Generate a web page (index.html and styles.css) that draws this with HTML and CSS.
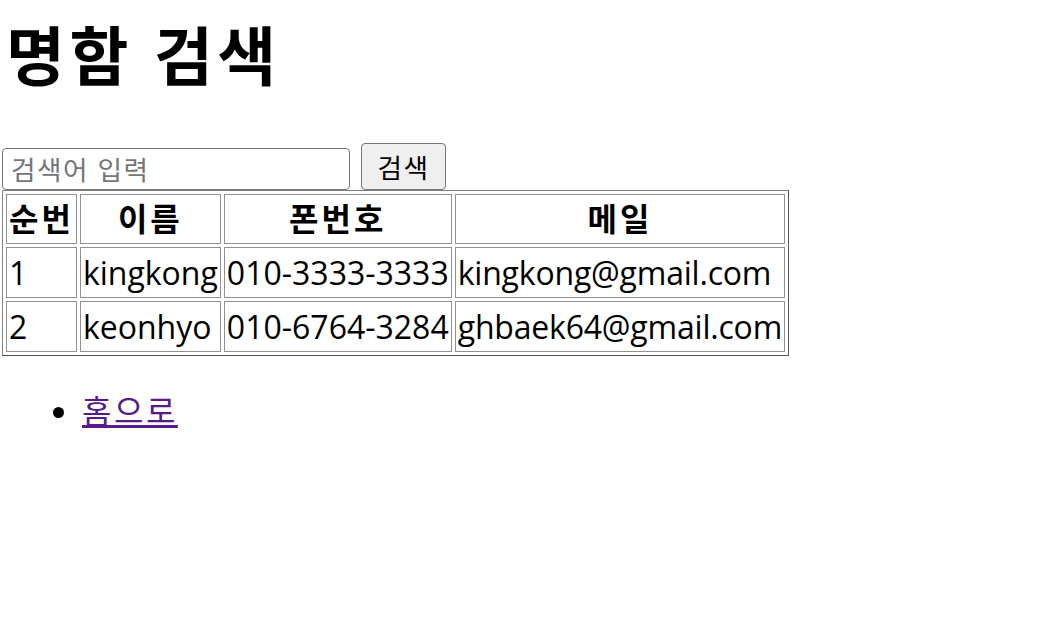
FILE: index.html
```html
<!DOCTYPE html>
<html lang="ko">
<head>
<meta charset="utf-8">
<title>명함 검색</title>
<link rel="stylesheet" href="styles.css">
</head>
<body>
<h1 class="title">명함 검색</h1>
<form class="search">
  <input class="search-input" type="text" placeholder="검색어 입력">
  <button class="search-btn" type="button">검색</button>
</form>
<table class="cards">
  <thead>
    <tr><th>순번</th><th>이름</th><th>폰번호</th><th>메일</th></tr>
  </thead>
  <tbody>
    <tr><td>1</td><td>kingkong</td><td>010-3333-3333</td><td class="mail">kingkong@gmail.com</td></tr>
    <tr><td>2</td><td>keonhyo</td><td>010-6764-3284</td><td class="mail">ghbaek64@gmail.com</td></tr>
  </tbody>
</table>
<ul class="links">
  <li><a class="home-link" href="#">홈으로</a></li>
</ul>
</body>
</html>
```

FILE: styles.css
```css
html, body {
  background: #fff;
}
body {
  margin: 0 2px;
  font-family: "Open Sans", "Noto Sans CJK KR", sans-serif;
  font-size: 32px;
  color: #000;
}
.title {
  font-size: 64px;
  font-weight: 700;
  line-height: 92px;
  letter-spacing: 4.5px;
  margin: 10px 0 41px 4px;
}
.search {
  display: flex;
  align-items: flex-end;
  gap: 11px;
  margin: 0;
}
.search-input {
  box-sizing: border-box;
  width: 348px;
  height: 42px;
  margin: 0;
  padding: 0 8px;
  border: 1px solid #767676;
  border-radius: 4px;
  font-family: inherit;
  font-size: 26.67px;
  letter-spacing: 1.5px;
  color: #000;
  background: #fff;
}
.search-input::placeholder {
  color: #757575;
}
.search-btn {
  box-sizing: border-box;
  width: 85px;
  height: 47px;
  margin: 0;
  padding: 0;
  border: 1px solid #767676;
  border-radius: 4px;
  background: #efefef;
  font-family: inherit;
  font-size: 26.67px;
  letter-spacing: 1.5px;
  color: #000;
}
.cards {
  border: 1px solid #808080;
  border-bottom-color: #555;
  border-right-color: #555;
  border-spacing: 3px;
  font-size: 32px;
}
.cards th,
.cards td {
  border: 1px solid #909090;
  padding: 1px 2px;
}
.cards th {
  font-weight: 700;
  text-align: center;
  letter-spacing: 3px;
  line-height: 46px;
}
.cards td {
  text-align: left;
  line-height: 47px;
}
.cards .mail {
  letter-spacing: -0.2px;
}
.links {
  margin: 32px 0;
  padding-left: 80px;
  line-height: 46px;
}
.home-link {
  color: #551a8b;
  text-decoration: underline;
  letter-spacing: 2.5px;
}
```
